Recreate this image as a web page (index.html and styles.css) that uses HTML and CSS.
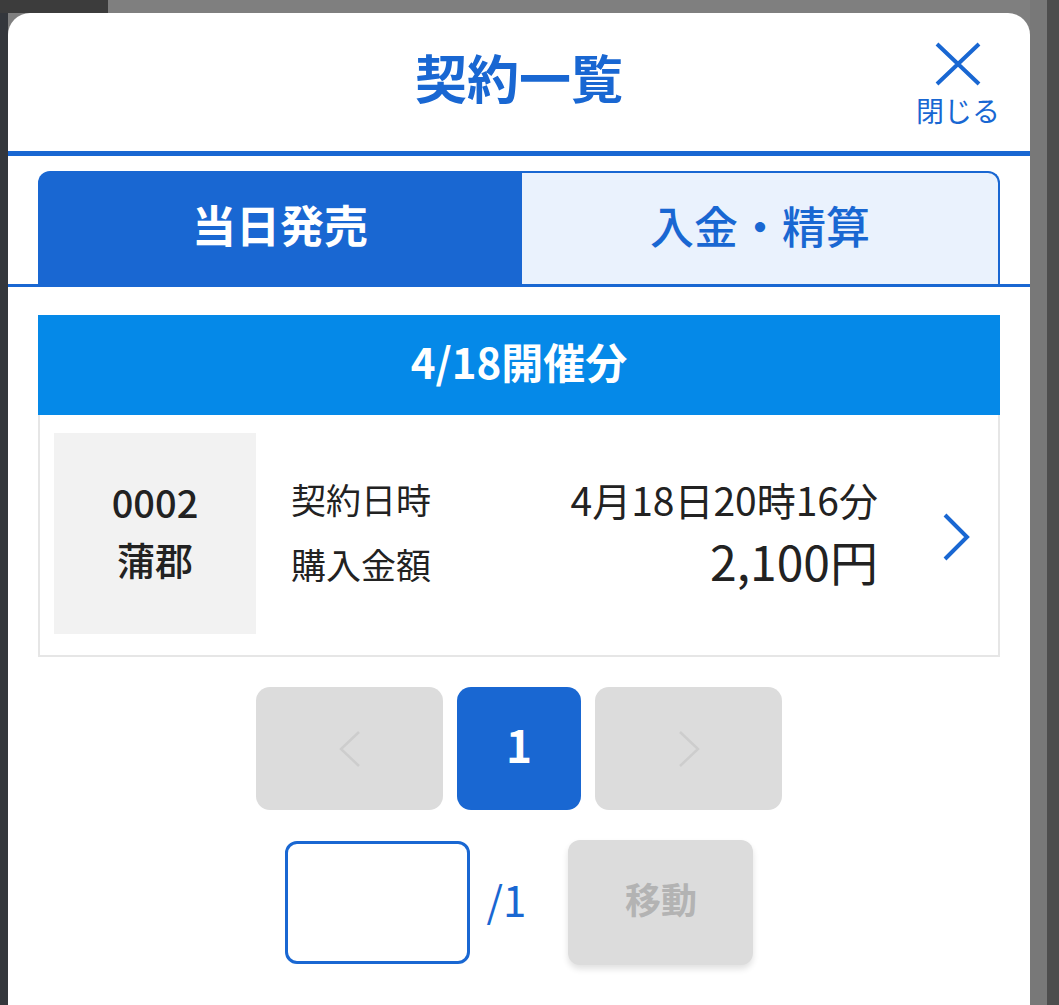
FILE: index.html
```html
<!DOCTYPE html>
<html lang="ja">
<head>
<meta charset="utf-8">
<title>契約一覧</title>
<link rel="stylesheet" href="styles.css">
</head>
<body>
<div class="modal">
  <header class="modal-header">
    <div></div>
    <h1 class="title">契約一覧</h1>
    <button class="close" type="button">
      <svg class="close-icon" width="46" height="44" viewBox="0 0 46 44"><path d="M2 2 L44 42 M44 2 L2 42" stroke="#1967d2" stroke-width="4" fill="none"/></svg>
      <span class="close-label">閉じる</span>
    </button>
  </header>
  <nav class="tabs">
    <div class="tab tab-active">当日発売</div>
    <div class="tab tab-inactive">入金・精算</div>
  </nav>
  <main class="content">
    <div class="section-title">4/18開催分</div>
    <div class="card">
      <div class="venue">
        <div>0002</div>
        <div>蒲郡</div>
      </div>
      <div class="info">
        <div class="label row1">契約日時</div>
        <div class="value row1 datetime">4月18日20時16分</div>
        <div class="label row2">購入金額</div>
        <div class="value row2 amount">2,100円</div>
      </div>
      <div class="arrow">
        <svg width="32" height="52" viewBox="0 0 32 52"><polyline points="5,4 27,26 5,48" stroke="#1967d2" stroke-width="4" fill="none"/></svg>
      </div>
    </div>
    <div class="pager">
      <div class="page-btn page-nav">
        <svg width="26" height="38" viewBox="0 0 26 38"><polyline points="22,2 4,19 22,36" stroke="#cdcdcd" stroke-width="2.5" fill="none"/></svg>
      </div>
      <div class="page-btn page-current">1</div>
      <div class="page-btn page-nav">
        <svg width="26" height="38" viewBox="0 0 26 38"><polyline points="4,2 22,19 4,36" stroke="#cdcdcd" stroke-width="2.5" fill="none"/></svg>
      </div>
    </div>
    <div class="jump">
      <div class="jump-input"></div>
      <div class="jump-total">/1</div>
      <div class="jump-btn">移動</div>
    </div>
  </main>
</div>
</body>
</html>
```
FILE: styles.css
```css
html, body {
  margin: 0;
  padding: 0;
}
body {
  width: 1059px;
  height: 1005px;
  overflow: hidden;
  font-family: "Noto Sans CJK JP", "Noto Sans", sans-serif;
  background:
    linear-gradient(to right, #3c3c3c 0 108px, transparent 108px) top left / 100% 13px no-repeat,
    linear-gradient(to right, #34373c 0 8px, transparent 8px 1030px, #787878 1030px 1047px, #4d4d4d 1047px),
    #7f7f7f;
  padding-top: 13px;
  box-sizing: border-box;
}
.modal {
  margin-left: 8px;
  width: 1022px;
  height: 992px;
  background: #fff;
  border-radius: 22px 22px 0 0;
  overflow: hidden;
}
.modal-header {
  height: 138px;
  display: grid;
  grid-template-columns: 1fr auto 1fr;
  align-items: center;
  border-bottom: 5px solid #1967d2;
}
.title {
  margin: 0;
  font-size: 52px;
  font-weight: 700;
  color: #1967d2;
  line-height: 1;
  padding-bottom: 10px;
}
.close {
  justify-self: end;
  margin-right: 30px;
  background: none;
  border: 0;
  padding: 0;
  display: flex;
  flex-direction: column;
  align-items: center;
  font-family: inherit;
  margin-top: 2px;
}
.close-icon {
  display: block;
}
.close-label {
  font-size: 28px;
  color: #1967d2;
  line-height: 1;
  margin-top: 10px;
}
.tabs {
  display: grid;
  grid-template-columns: 484fr 478fr;
  padding: 15px 30px 0;
  border-bottom: 3px solid #1967d2;
}
.tab {
  height: 113px;
  display: flex;
  align-items: center;
  justify-content: center;
  font-size: 44px;
  box-sizing: border-box;
  padding-bottom: 7px;
}
.tab-active {
  background: #1967d2;
  color: #fff;
  font-weight: 700;
  border-radius: 12px 0 0 0;
}
.tab-inactive {
  background: #eaf2fd;
  color: #1967d2;
  font-weight: 500;
  border: 2px solid #1967d2;
  border-left: 0;
  border-bottom: 0;
  border-radius: 0 12px 0 0;
}
.content {
  padding: 28px 30px 0;
}
.section-title {
  height: 100px;
  box-sizing: border-box;
  padding-bottom: 10px;
  background: #0589e8;
  color: #fff;
  font-size: 42px;
  font-weight: 700;
  display: flex;
  align-items: center;
  justify-content: center;
}
.card {
  height: 242px;
  box-sizing: border-box;
  border: 2px solid #e6e6e6;
  border-top: 0;
  padding: 18px 0 0 14px;
  display: flex;
  align-items: flex-start;
}
.venue {
  width: 202px;
  height: 201px;
  background: #f2f2f2;
  display: flex;
  flex-direction: column;
  align-items: center;
  justify-content: center;
  font-size: 38px;
  font-weight: 500;
  color: #222;
  line-height: 57px;
  padding-bottom: 8px;
  box-sizing: border-box;
}
.info {
  flex: 1;
  margin-left: 35px;
  align-self: center;
  display: grid;
  grid-template-columns: auto 1fr;
  row-gap: 2px;
  color: #222;
  padding-bottom: 24px;
}
.label {
  font-size: 35px;
}
.value {
  text-align: right;
}
.row1 {
  line-height: 58px;
}
.row2 {
  line-height: 60px;
}
.datetime {
  font-size: 39px;
}
.amount {
  font-size: 48px;
}
.label.row2 {
  padding-top: 4px;
}
.arrow {
  width: 120px;
  align-self: center;
  display: flex;
  justify-content: flex-end;
  padding-right: 26px;
  box-sizing: border-box;
  padding-bottom: 14px;
}
.arrow svg {
  display: block;
}
.pager {
  display: flex;
  justify-content: center;
  gap: 14px;
  margin-top: 30px;
}
.page-btn {
  height: 123px;
  border-radius: 14px;
  display: flex;
  align-items: center;
  justify-content: center;
}
.page-nav {
  width: 187px;
  background: #dcdcdc;
}
.page-current {
  width: 124px;
  background: #1967d2;
  color: #fff;
  font-size: 44px;
  font-weight: 700;
  box-sizing: border-box;
  padding-bottom: 10px;
}
.jump {
  display: flex;
  justify-content: center;
  align-items: center;
  margin-top: 30px;
}
.jump-input {
  width: 185px;
  height: 123px;
  box-sizing: border-box;
  border: 3px solid #1967d2;
  border-radius: 12px;
  background: #fff;
}
.jump-total {
  font-size: 42px;
  color: #1967d2;
  margin: 0 42px 8px 17px;
}
.jump-btn {
  width: 185px;
  height: 125px;
  box-sizing: border-box;
  padding-bottom: 10px;
  background: #dcdcdc;
  border-radius: 12px;
  color: #b3b3b3;
  font-size: 36px;
  font-weight: 700;
  display: flex;
  align-items: center;
  justify-content: center;
  box-shadow: 0 4px 6px rgba(0, 0, 0, 0.12);
}
```
